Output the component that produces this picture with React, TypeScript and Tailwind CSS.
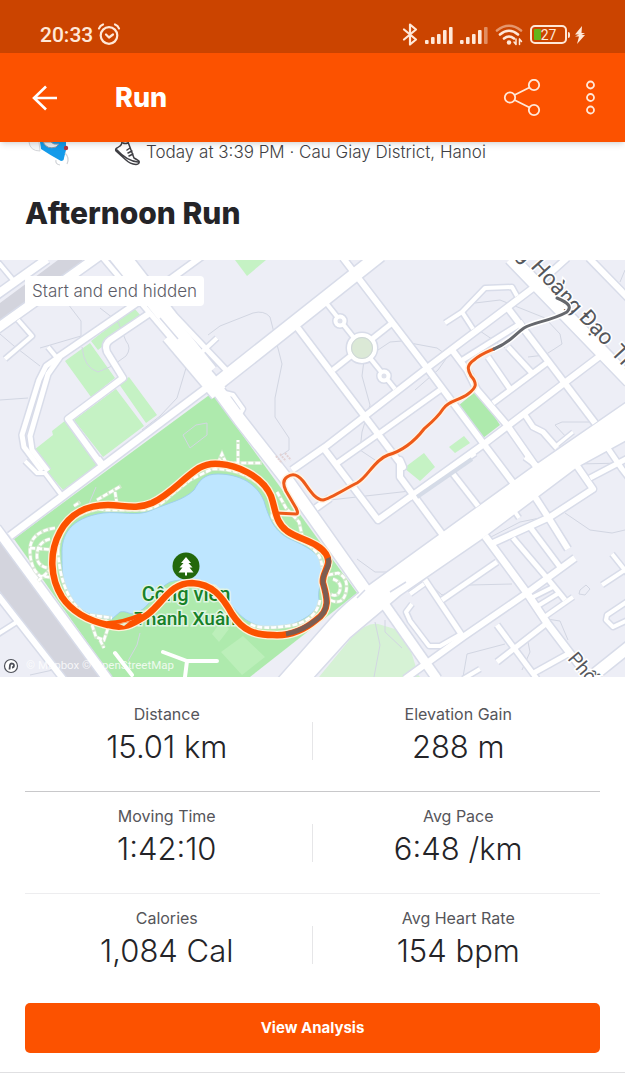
import React from 'react';

interface Stat {
  label: string;
  value: string;
}

interface Road {
  d: string;
  w: number;
}

const statRows: Stat[][] = [
  [
    { label: 'Distance', value: '15.01 km' },
    { label: 'Elevation Gain', value: '288 m' },
  ],
  [
    { label: 'Moving Time', value: '1:42:10' },
    { label: 'Avg Pace', value: '6:48 /km' },
  ],
  [
    { label: 'Calories', value: '1,084 Cal' },
    { label: 'Avg Heart Rate', value: '154 bpm' },
  ],
];

// streets, west side first
const roads: Road[] = [
  { d: 'M-5 36L47-1', w: 8 },
  { d: 'M-5 70L100-5', w: 9 },
  { d: 'M-2 2L13 20', w: 4 },
  { d: 'M18 60L32 76L5 99', w: 4 },
  { d: 'M48 87L57 98', w: 4 },
  { d: 'M57 98L150 34L205-6', w: 6 },
  { d: 'M60 96L46 106L39 120L22 175L24 187L42 211', w: 5 },
  { d: 'M60 97L48 114L30 176L32 190L48 211', w: 5 },
  { d: 'M25 201L37 213L45 213L63 237', w: 4 },
  { d: 'M98 198L105 207', w: 5 },
  { d: 'M150 53L110 80Q104 84 107 92L123 118L68 159L103 207', w: 6 },
  { d: 'M103-2L170 77', w: 5 },
  { d: 'M130-2L175 56L227 111', w: 5 },
  { d: 'M202 92L217 78', w: 4 },
  { d: 'M116-5L210 112', w: 15 },
  { d: 'M170 75L219 133', w: 17 },
  { d: 'M215 126L240 160L287 220L369 336', w: 12 },
  { d: 'M225 133L233 135L243 149L240 154', w: 4 },
  { d: 'M217 120L10 276', w: 7 },
  { d: 'M217 124L380-5', w: 13 },
  { d: 'M343-2L385 53L427 108L483 183L520 232', w: 6 },
  { d: 'M297 67L403 207L400 200L400 217L445 278', w: 6 },
  { d: 'M327 44L362 88L395 129', w: 4 },
  { d: 'M333 110L391 64', w: 5 },
  { d: 'M292 210L325 187L427 108L537 25L567-2', w: 6 },
  { d: 'M336 204L380 173L440 130', w: 5 },
  { d: 'M325 190L378 260L484 184L600 96', w: 6 },
  { d: 'M316 248L330 238', w: 6 },
  { d: 'M410 238L475 193', w: 5 },
  { d: 'M445 63L462 52L485 28L512 27L517 36', w: 4 },
  { d: 'M462 52L473 69', w: 4 },
  { d: 'M452 90L467 110L477 130L507 165L537 208', w: 6 },
  { d: 'M461 101L523 62', w: 5 },
  { d: 'M507 47L595 163', w: 6 },
  { d: 'M508 87L532 113', w: 5 },
  { d: 'M488 97L510 129', w: 5 },
  { d: 'M493 143L548 102', w: 5 },
  { d: 'M525 155L533 167L543 172L557 188', w: 5 },
  { d: 'M557 185L573 172', w: 3 },
  { d: 'M511-2L537 25L630 121', w: 13 },
  { d: 'M589-2L630 40', w: 6 },
  { d: 'M450 210L478 246', w: 5 },
  { d: 'M607 187L622 209L632 222', w: 5 },
  { d: 'M525 197L540 208', w: 5 },
  { d: 'M590 218L630 197', w: 5 },
  { d: 'M575 203L593 229L550 257L493 283', w: 6 },
  { d: 'M535 237L548 257L568 289', w: 6 },
  { d: 'M515 252L519 258', w: 4 },
  { d: 'M485 276L527 333L547 363L592 422', w: 7 },
  { d: 'M530 267L560 307', w: 5 },
  { d: 'M513 278L547 318L565 340', w: 5 },
  { d: 'M405 419L463 377L527 333L575 298', w: 6 },
  { d: 'M442 340L497 302', w: 5 },
  { d: 'M425 320L463 377', w: 5 },
  { d: 'M385 345L437 419', w: 9 },
  { d: 'M410 334L424 324', w: 4 },
  { d: 'M412 344L406 352L410 361L429 386L440 386L461 374', w: 4 },
  { d: 'M531 338L555 326', w: 4 },
  { d: 'M536 347L559 333', w: 4 },
  { d: 'M543 358L573 337', w: 4 },
  { d: 'M497 402L547 363', w: 5 },
  { d: 'M497 365L537 419', w: 5 },
  { d: 'M532 414L568 394', w: 5 },
  { d: 'M463 419L480 409', w: 4 },
  { d: 'M612 294L628 314', w: 4 },
  { d: 'M602 325L628 308', w: 4 },
  { d: 'M628 341L607 355L606 360L613 367L628 360', w: 4 },
  { d: 'M585 422L630 386', w: 11 },
  { d: 'M-4 268L108 420', w: 9 },
  { d: 'M-4 333L64 420', w: 6 },
  { d: 'M-2 374L20 360', w: 4 },
];

const avenue = 'M630 140L533 207L410 296L367 327Q345 343 330 360L277 420L311 420L350 377L400 335L480 280L577 207L630 178Z';

// park walkways
const walkways: string[] = [
  'M58 290Q60 265 78 256T105 250L143 250Q158 248 170 236L190 220L212 209Q238 208 256 222T272 256Q278 272 300 281T322 308',
  'M58 290Q60 330 78 348T108 360',
  'M320 340Q316 362 288 366T250 364',
  'M55 268Q30 272 30 290T40 316L56 318M50 279Q38 282 37 294T48 308M30 288L56 290M38 321L52 308',
  'M328 315L338 313Q349 318 346 332T330 340M333 319Q342 322 340 330T330 334',
  'M92 365L96 377L104 380L108 368M100 380L104 388',
  'M97 240L121 226M115 232L117 244M74 246L80 242M218 203L222 194L226 203L262 203M238 203L238 180M90 355L112 358',
  'M277 232L286 248L299 262L302 275',
];

// faint outlines of contours and minor tracks
const tracks =
  'M68 44L81 61V76L40 88M0 74L14 86L40 106M0 140L28 138M82 87Q84 108 98 112L112 106L126 96Q132 88 126 81L118 62L100 48' +
  'M208 75L220 66L253 53Q264 50 270 57L282 104L275 138V157L289 178V190L280 196M186 108L177 138L160 156L142 170M183 175L196 165L207 163V175L190 188Z' +
  'M375 92L390 82L402 81M364 100L362 116L370 145L362 172L360 190L378 202M410 83L437 88L448 96L438 110L415 130M475 43L500 40L545 58L560 74L562 84L545 95L528 97' +
  'M480 71L505 88M567 178L555 165L562 162H590M330 240L410 231M357 299L375 312L392 312M375 362L380 385L374 417M385 360V372L402 388' +
  'M489 278L520 262L545 257M565 253L590 270L612 273L625 270M427 322L442 335L470 325L512 324M463 417L467 394L505 384M547 359L560 361L568 380M528 382L530 392L522 410' +
  'M580 330L586 325L590 329L585 335L579 334ZM96 227L88 246M140 373L137 385L128 401M30 415L62 408L78 409M577 204L625 203M620 22L625 10';

const loop =
  'M220 204C235 205 262 215 271 236C276 250 275 262 287 271C300 280 318 282 326 294C333 305 321 313 323 323C327 337 331 350 316 360C303 371 288 376 273 375C255 375 243 371 232 354C222 336 212 324 192 323C170 323 164 342 147 355C134 363 125 370 108 365C90 361 72 352 62 337C50 318 49 292 60 272C70 253 88 245 108 245C123 245 136 250 152 243C171 234 182 219 199 208C206 204 212 203 220 204Z';
const loopShade = 'M328 298C332 307 321 313 323 323C327 337 331 350 316 360C306 368 297 372 286 374';
const link =
  'M276 253L296 254Q299 254 296 248L286 231Q281 221 287 217Q295 211 303 221C309 229 315 240 323 240C330 239 348 227 357 223C368 217 374 200 388 195C402 191 414 182 424 169C432 162 438 157 443 149C449 140 459 141 468 134C476 128 478 124 471 116C467 109 467 105 474 100C481 94 487 92 494 89';
const linkEnd = 'M494 89C511 82 515 74 524 68C534 62 551 61 567 52C572 47 569 43 557 38';

const StatusBar: React.FC = () => (
  <div className="flex h-[53px] items-center justify-between bg-[#cb4400] pt-4 pr-[39px] pl-10 text-[#ffe8d8]">
    <div className="flex items-center gap-1">
      <span className="font-['Roboto'] text-[21px] leading-6 font-medium">20:33</span>
      <svg className="h-6 w-6" viewBox="0 0 24 24" fill="none" stroke="currentColor" strokeWidth="2.2" strokeLinecap="round">
        <circle cx="12" cy="12.500" r="8.3" />
        <path d="M9 11.500l3 3 4-3M2 5.500Q3 2.500 6 1.500M18 1.500q3 1 4 4" strokeLinejoin="round" />
      </svg>
    </div>
    <div className="flex items-center gap-[7px]">
      <svg className="h-6 w-4" viewBox="0 0 16 24" fill="none" stroke="currentColor" strokeWidth="2.2" strokeLinejoin="round" strokeLinecap="round">
        <path d="M2 6.500l12 10-6 5V1.500l6 5-12 10" />
      </svg>
      <Signal bars={5} />
      <Signal bars={4} />
      <svg className="h-6 w-7" viewBox="0 0 28 24" fill="none" stroke="currentColor" strokeWidth="2.600" strokeLinecap="round">
        <path d="M2 7.500Q14-2 26 7.500" opacity=".5" />
        <path d="M5 11.500Q14 4 23 11.500M9 15.500Q14 11.500 19 15.500" />
        <circle cx="14" cy="19.500" r="2.200" fill="currentColor" stroke="none" />
        <path d="M21 16v5.500M24.500 16v5.500M19 19l2 2.500M26.500 18.500l-2-2.500" strokeWidth="1.500" />
      </svg>
      <div className="flex items-center">
        <div className="relative flex h-[19px] w-[37px] items-center justify-center rounded-[5px] border-2 border-current">
          <div className="absolute top-[2px] bottom-[2px] left-[2px] w-[7px] rounded-[1px] bg-[#63b51b]" />
          <span className="relative font-['Roboto'] text-[14px] leading-4">27</span>
        </div>
        <div className="ml-px h-[6px] w-[2px] rounded-r bg-current" />
        <svg className="ml-1 h-5 w-3" viewBox="0 0 12 20" fill="currentColor">
          <path d="M8 1L1 9.500H5L1 11.500H5L3 19L11 10H7.500L11 8H7.500Z" />
        </svg>
      </div>
    </div>
  </div>
);

const Signal: React.FC<{ bars: number }> = ({ bars }) => (
  <svg className="h-[18px] w-7" viewBox="0 0 28 18" fill="currentColor">
    {[4, 7, 10, 14, 17].map((h, i) => (
      <rect key={h} x={i * 6} y={18 - h} width="3.600" height={h} rx="1" opacity={i < bars ? 1 : 0.45} />
    ))}
  </svg>
);

const AppBar: React.FC = () => (
  <header className="relative z-10 flex h-[89px] items-center bg-[#fc5200] pr-5 pl-8 text-white shadow-md">
    <button aria-label="Back">
      <svg className="h-[26px] w-[26px]" viewBox="0 0 26 26" fill="none" stroke="currentColor" strokeWidth="2.600">
        <path d="M25 13H2M14 1.500L2 13l12 11.500" />
      </svg>
    </button>
    <h1 className="ml-[57px] flex-1 font-['Inter'] text-[27px] leading-8 font-extrabold">Run</h1>
    <button aria-label="Share" className="mr-[34px]">
      <svg className="h-[38px] w-[38px]" viewBox="0 0 38 38" fill="none" stroke="#ffe8d8" strokeWidth="1.800">
        <circle cx="7" cy="18.500" r="5.200" />
        <circle cx="31" cy="6" r="5.200" />
        <circle cx="31" cy="31" r="5.200" />
        <path d="M11.500 16L26.500 8.500M11.500 21L26.500 28.500" />
      </svg>
    </button>
    <button aria-label="More options" className="px-[10px]">
      <svg className="h-9 w-[10px]" viewBox="0 0 10 36" fill="none" stroke="#ffe8d8" strokeWidth="1.800">
        <circle cx="5.500" cy="5" r="3.500" />
        <circle cx="5.500" cy="17.500" r="3.500" />
        <circle cx="5.500" cy="30" r="3.500" />
      </svg>
    </button>
  </header>
);

const RouteMap: React.FC = () => (
  <div className="relative">
    <svg className="block h-auto w-full" viewBox="0 0 625 417" role="img" aria-label="Route map">
      <rect width="625" height="417" fill="#edeef6" />
      <path d="M0 43L58 0H82V8L0 65ZM0 278V334L66 417H104Z" fill="#d3d4dd" />
      <path d="M235 0H266L247 16Z" fill="#c5f2c4" />
      <path d="M134 48L141 56L98 90L91 81ZM90 83L65 101L91 137L115 118ZM129 117L119 124L146 163L157 155ZM116 129L74 160L103 197L144 166ZM34 190L53 175L52 171L66 160L98 205L63 230L50 215Z" fill="#c5f2c4" />
      <path d="M404 208L424 193L435 207L420 221ZM449 187L464 176L470 183L455 193Z" fill="#c5f2c4" />
      <path d="M458 146L477 130L500 165L483 178Z" fill="#aeeaad" />
      <path d="M212 133L357 333L250 417H112L14 279Z" fill="#aeeaad" />
      <path d="M352 377Q367 362 378 364L405 372L419 417H319ZM406 400L420 417H404Z" fill="#d6f2d5" />
      <path d="M243 376L265 397L242 415L221 392ZM222 360L229 369L219 382L212 374Z" fill="#bcefba" />

      <path d={tracks} fill="none" stroke="#d2d6e2" strokeWidth="1" strokeLinejoin="round" />

      {/* casings go under every carriageway so that crossings stay open */}
      <g fill="none" stroke="#d8dce9" strokeLinejoin="round">
        {roads.map((r) => (
          <path key={r.d} d={r.d} strokeWidth={r.w + 3} />
        ))}
        <path d={avenue} strokeWidth="3" />
        <circle cx="362" cy="88" r="13" strokeWidth="7" />
        <circle cx="340" cy="61" r="5" strokeWidth="6" />
        <circle cx="384" cy="116" r="5" strokeWidth="6" />
      </g>
      <g fill="none" stroke="#ffffff" strokeLinejoin="round">
        {roads.map((r) => (
          <path key={r.d} d={r.d} strokeWidth={r.w} />
        ))}
        <path d={avenue} fill="#ffffff" stroke="none" />
        <path d="M115 393L132 415M163 392L187 401H217M187 401L185 417" strokeWidth="4" strokeLinecap="round" />
      </g>
      <circle cx="362" cy="88" r="13" fill="#dbe9d6" stroke="#ffffff" strokeWidth="4" />
      <circle cx="362" cy="88" r="10.500" fill="none" stroke="#cfd6da" strokeWidth="1" />
      <circle cx="340" cy="61" r="4.500" fill="#dfe2ec" stroke="#ffffff" strokeWidth="4" />
      <circle cx="384" cy="116" r="4.500" fill="#dfe2ec" stroke="#ffffff" strokeWidth="4" />
      <path d="M160 58L178 79M357 338L365 330M390 332L406 322" fill="none" stroke="#d8dce9" strokeWidth="1.500" />
      <path d="M417 237L472 199" stroke="#d5dbe7" strokeWidth="4" />

      <path
        d="M62 295C61 275 70 258 103 253C120 251 138 257 152 250C168 243 184 240 194 230C200 220 204 214 218 214C240 214 257 224 264 241C270 262 276 272 290 279C306 286 320 293 324 307C325 318 317 325 319 340C318 352 304 360 290 365C277 369 262 369 250 362C240 358 228 341 218 329C206 319 182 318 170 322C156 329 150 347 138 352C130 357 128 350 120 352L112 359C92 358 76 350 68 333C62 320 62 310 62 295Z"
        fill="#bee6ff"
        stroke="#9fd0ea"
        strokeWidth="1"
      />
      <g fill="none" stroke="#dfe8d8" strokeWidth="4" opacity=".7">
        {walkways.map((d) => (
          <path key={d} d={d} />
        ))}
      </g>
      <g fill="none" stroke="#ffffff" strokeWidth="2.600" strokeDasharray="5 2">
        {walkways.map((d) => (
          <path key={d} d={d} />
        ))}
      </g>
      <path d="M276 196l6 7M280 194l6 7M285 193l6 7" stroke="#e2d2d4" strokeWidth="2" strokeDasharray="2 1" />

      <circle cx="186" cy="306" r="13.500" fill="#23680c" />
      <path d="M186 297l-5 6h2.500l-4 4.500h3l-4 5H185v3h2v-3h6.500l-4-5h3l-4-4.500h2.500z" fill="#ffffff" />
      <g className="font-['Roboto']" fontSize="19" fontWeight="500" fill="#178128" stroke="#e0f5e4" strokeWidth="3" paintOrder="stroke" textAnchor="middle">
        <text x="186" y="341" fontSize="20">
          Công viên
        </text>
        <text x="185" y="365">Thanh Xuân</text>
      </g>
      <g className="font-['Roboto']" fontSize="22" fill="#55575c" stroke="#ffffff" strokeWidth="3" paintOrder="stroke">
        <text transform="translate(516 -5) rotate(47)">g</text>
        <text transform="translate(530 7) rotate(48)">Hoàng</text>
        <text transform="translate(578 58) rotate(47)">Đạo</text>
        <text transform="translate(610 93) rotate(47)">Thúy</text>
        <text transform="translate(567 399) rotate(50)" fontSize="19">
          Phố
        </text>
      </g>

      <g fill="none" strokeLinecap="round" strokeLinejoin="round">
        <path d={link} stroke="#fff3e4" strokeWidth="6" />
        <path d={linkEnd} stroke="#ffffff" strokeWidth="6" />
        <path d={loop} stroke="#fff0d8" strokeWidth="9" />
        <path d={link} stroke="#ee5a19" strokeWidth="3" />
        <path d={linkEnd} stroke="#66686d" strokeWidth="3" />
        <path d={loop} stroke="#fc5200" strokeWidth="6.500" />
        <path d="M108 363Q124 362 140 355" stroke="#fc5200" strokeWidth="4" />
        <path d={loopShade} stroke="#7c5d52" strokeWidth="5" strokeLinecap="butt" />
      </g>
      <path d="M119 364l10-2-5 4z" fill="#e4f2d8" />

      <circle cx="11" cy="406" r="6.500" fill="#ffffff" stroke="#4e5058" strokeWidth="1.200" />
      <path d="M9.500 409.500l.500-4.500a2 2 0 1 1 2 2.500" fill="none" stroke="#4e5058" strokeWidth="1.800" />
      <text x="26" y="409" className="font-['Roboto']" fontSize="11.500" fill="#ffffff" opacity=".8">
        © Mapbox © OpenStreetMap
      </text>
    </svg>
    <span className="absolute top-4 left-[25px] flex h-[30px] items-center rounded-[4px] bg-white px-[7px] font-['Inter'] text-[17px] leading-5 font-light text-[#5d5d68]">
      Start and end hidden
    </span>
  </div>
);

const App: React.FC = () => {
  return (
    <div className="min-h-screen bg-white font-['Inter',sans-serif] text-[#242428]">
      <StatusBar />
      <AppBar />

      <main>
        <div className="flex h-[26px] items-start overflow-hidden pl-[25px] text-[#3f3f44]">
          <svg className="h-[26px] w-[46px]" viewBox="0 0 46 26">
            <path d="M4 0Q5 9 15 9L14 0" fill="#f6f7f9" stroke="#d4d6da" strokeWidth="1" />
            <path d="M15 0L16 7Q25 13 36 19Q39 19 39 16L41 8V0Z" fill="#159bea" />
            <path d="M18 0Q22 8 31 5L34 2Q28 3 26 0Z" fill="#e9edf2" stroke="#8f99a5" strokeWidth="1" />
            <circle cx="41" cy="6" r="2.200" fill="#b03542" />
            <path d="M40 11Q45 16 42 22M31 18Q30 22 35 23" fill="none" stroke="#cfd2d6" strokeWidth="1.200" />
          </svg>
          <svg className="ml-[43px] h-6 w-[26px]" viewBox="0 0 26 24" fill="none" stroke="currentColor" strokeWidth="1.500" strokeLinejoin="round" strokeLinecap="round">
            <path d="M8-1Q8 3 6 4L3 6Q1 7 2 9L12 18Q16 22 22 22.500Q26 22 25 19Q22 17 20 16L17 8L14 0M3 8Q13 19 24 20M9 1Q11 2 14 1M13 8l3-2M14 11l4-2M15 14l4-2" />
          </svg>
          <p className="ml-[6px] text-[17px] leading-5 font-light whitespace-nowrap">Today at 3:39 PM · Cau Giay District, Hanoi</p>
        </div>
        <h2 className="px-[25px] pt-[25px] pb-[27px] text-[30px] leading-10 font-extrabold">Afternoon Run</h2>

        <RouteMap />

        <section className="px-[25px] pt-[13px]">
          {statRows.map((row, i) => (
            <dl
              key={row[0].label}
              className={`grid h-[102px] grid-cols-2 gap-x-2 ${i === 0 ? 'border-b border-[#c8c8ca]' : i === 1 ? 'border-b border-[#ededef]' : ''}`}
            >
              {row.map((stat, j) => (
                <div key={stat.label} className="relative pt-[14px] text-center">
                  {j === 1 && <span className="absolute top-8 -left-[5px] h-[38px] w-px bg-[#e6e6e8]" />}
                  <dt className="text-[16px] leading-5 text-[#55555a]">{stat.label}</dt>
                  <dd className="pt-1 text-[31px] leading-[38px] font-light">{stat.value}</dd>
                </div>
              ))}
            </dl>
          ))}
          <button className="mt-[7px] h-[50px] w-full rounded-[5px] bg-[#fc5200] text-[15px] leading-5 font-bold text-white">
            View Analysis
          </button>
        </section>
        <div className="mt-[19px] h-px bg-[#e0e0e2]" />
      </main>
    </div>
  );
};

export default App;
